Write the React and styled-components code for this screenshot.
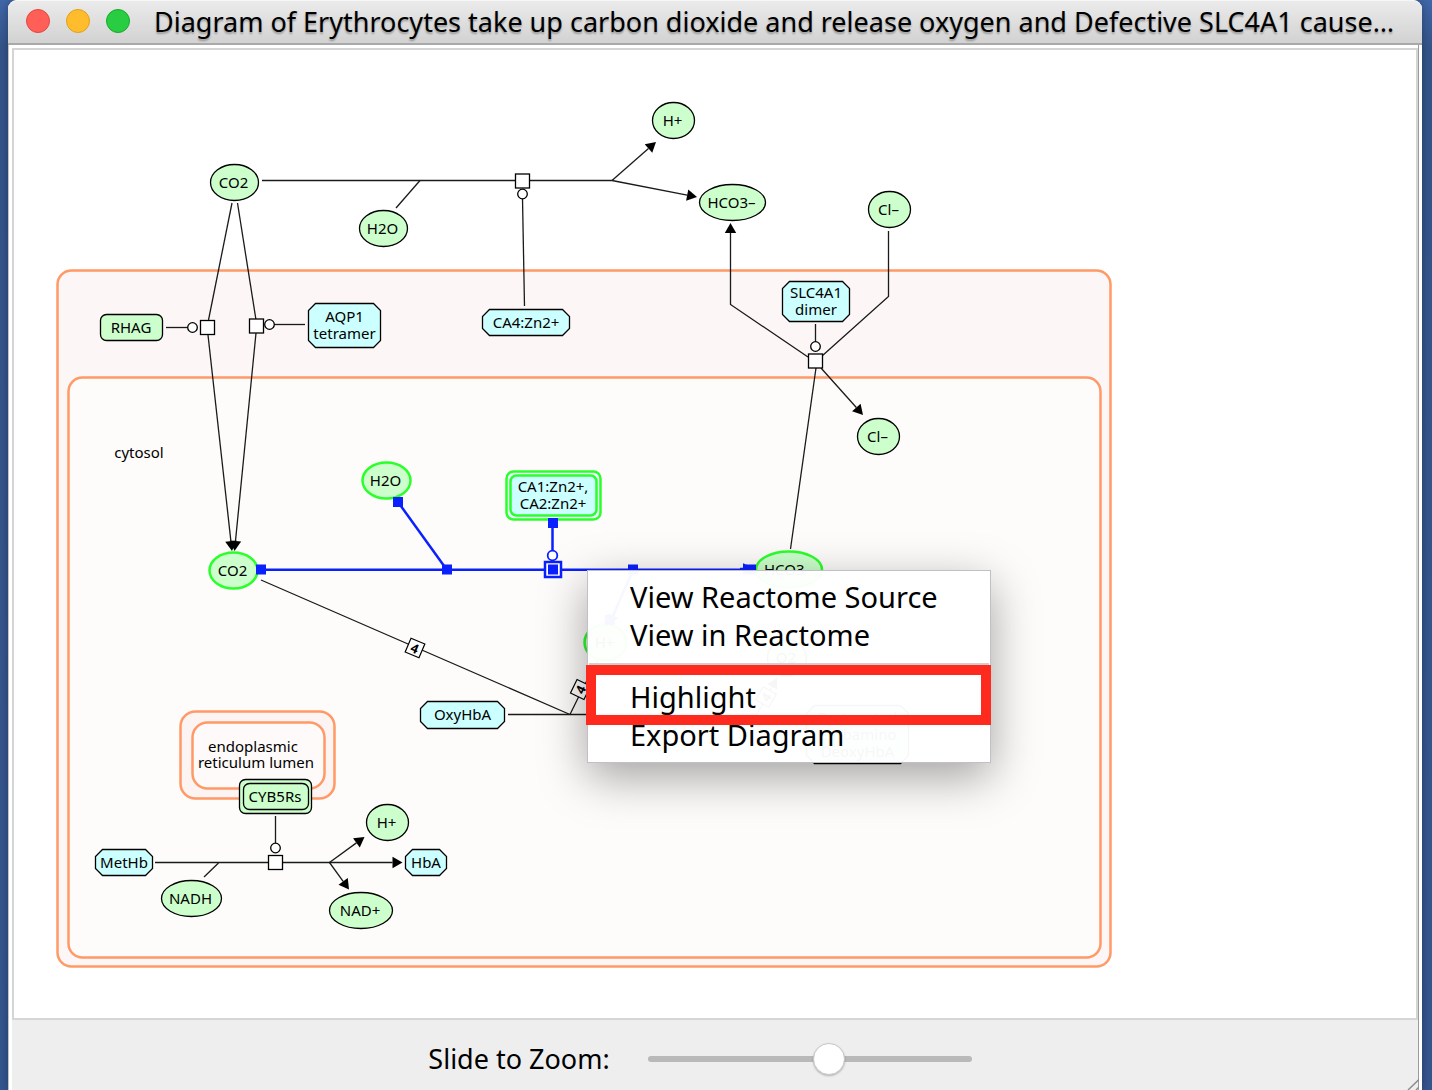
import React, { useState } from "react";
import styled, { createGlobalStyle } from "styled-components";

const FONT = '"Noto Sans", "Open Sans", sans-serif';
const ORANGE = "#ff9966";
const LIME = "#2bff2b";
const BLUE = "#0a20ff";

const GlobalStyle = createGlobalStyle`
  * { box-sizing: border-box; }
  body {
    margin: 0;
    font-family: ${FONT};
    color: #000;
    background: linear-gradient(#4067a8, #34548a 48px, #35558f);
  }
`;

const Desktop = styled.div`
  min-height: 100vh;
  display: flex;
  padding: 0 10px 0 8px;
`;

const Window = styled.main`
  flex: 1;
  min-width: 0;
  display: flex;
  flex-direction: column;
  border-radius: 9px 9px 0 0;
  background: #fff;
  box-shadow: 0 0 10px rgba(0, 0, 0, 0.3);
`;

const TitleBar = styled.header`
  height: 45px;
  display: flex;
  align-items: center;
  gap: 24px;
  padding: 0 24px 3px 18px;
  border-radius: 9px 9px 0 0;
  border-top: 1px solid #f6f6f6;
  border-bottom: 2px solid #a9a9a9;
  background: linear-gradient(#ebebeb, #d2d2d2);
`;

const Lights = styled.div`
  display: flex;
  flex: none;
  gap: 16px;
`;

const Light = styled.button`
  width: 24px;
  height: 24px;
  padding: 0;
  border: 1px solid ${(p) => p.$edge};
  border-radius: 50%;
  background: ${(p) => p.$fill};
`;

const Title = styled.h1`
  margin: 0;
  padding-top: 2px;
  font-size: 27px;
  line-height: 36px;
  font-weight: 400;
  white-space: nowrap;
  text-shadow: 0 2px 2px rgba(0, 0, 0, 0.3);
`;

const Body = styled.div`
  flex: 1;
  display: flex;
  flex-direction: column;
  margin-right: 3px;
  padding: 3px 0 0 3px;
  border-left: 1px solid #c4c4c4;
  border-right: 1px solid #9c9c9c;
`;

const Canvas = styled.section`
  position: relative;
  flex: 1;
  border: 2px solid #d5d5d5;
  background: #fff;
`;

const Footer = styled.footer`
  position: relative;
  height: 70px;
  display: flex;
  align-items: center;
  justify-content: center;
  gap: 38px;
  padding: 8px 30px 0 0;
  background: #eee;
`;

const ZoomLabel = styled.label`
  font-size: 27px;
  line-height: 36px;
`;

const ZoomSlider = styled.input`
  appearance: none;
  width: 324px;
  height: 34px;
  margin: 0;
  background: transparent;
  &::-webkit-slider-runnable-track {
    height: 6px;
    border-radius: 3px;
    background: #b9b9b9;
  }
  &::-webkit-slider-thumb {
    appearance: none;
    width: 32px;
    height: 32px;
    margin-top: -13px;
    border: 1px solid #c8c8c8;
    border-radius: 50%;
    background: #fff;
    box-shadow: 0 1px 2px rgba(0, 0, 0, 0.25);
  }
`;

const Grip = styled.svg`
  position: absolute;
  right: -1px;
  bottom: 0;
`;

const Menu = styled.div`
  position: absolute;
  left: 573px;
  top: 520px;
  width: 404px;
  display: flex;
  flex-direction: column;
  padding: 7px 0 8px;
  border: 1px solid rgba(150, 150, 160, 0.6);
  background: rgba(255, 255, 255, 0.965);
  box-shadow: 0 14px 44px rgba(0, 0, 0, 0.36);
`;

const MenuItem = styled.button`
  height: 38px;
  padding: 0 0 0 42px;
  border: 0;
  background: transparent;
  font: 400 29px/38px ${FONT};
  text-align: left;
`;

const MenuRule = styled.hr`
  width: 400px;
  height: 2px;
  margin: 9px 0 13px 1px;
  border: 0;
  background: #cfcfcf;
`;

const Callout = styled.div`
  position: absolute;
  left: -2px;
  top: 94px;
  width: 405px;
  height: 60px;
  border: 10px solid #ff2a1e;
  pointer-events: none;
`;

const Drawing = styled.svg`
  display: block;
`;

const Caption = styled.text`
  font-family: ${FONT};
  font-size: 15px;
  text-anchor: middle;
`;

const Count = styled.text`
  font-family: ${FONT};
  font-size: 13px;
  font-weight: 700;
  text-anchor: middle;
`;

const Edge = styled.polyline`
  fill: none;
  stroke: ${(p) => (p.$on ? BLUE : "#1a1a1a")};
  stroke-width: ${(p) => (p.$on ? 2.5 : 1.3)};
`;

const Compartment = styled.rect`
  fill: ${(p) => p.$fill};
  stroke: ${ORANGE};
  stroke-width: 2.5;
`;

function Labels({ x, y, lines, step = 17 }) {
  const first = y + 5 - ((lines.length - 1) * step) / 2;
  return lines.map((t, i) => (
    <Caption key={t} x={x} y={first + i * step}>{t}</Caption>
  ));
}

function Molecule({ x, y, rx = 24, label, on }) {
  return (
    <g>
      <ellipse cx={x} cy={y} rx={rx} ry="18" fill="#ccffcc" stroke={on ? LIME : "#000"} strokeWidth={on ? 2.5 : 1.3} />
      <Labels x={x - 1} y={y} lines={[label]} />
    </g>
  );
}

function Complex({ x, y, w, h, c = 7, lines }) {
  const pts = [
    [x + c, y], [x + w - c, y], [x + w, y + c], [x + w, y + h - c],
    [x + w - c, y + h], [x + c, y + h], [x, y + h - c], [x, y + c],
  ].join(" ");
  return (
    <g>
      <polygon points={pts} fill="#ccffff" stroke="#000" strokeWidth="1.3" />
      <Labels x={x + w / 2} y={y + h / 2} lines={lines} />
    </g>
  );
}

function Arrow({ points, on, back = 10 }) {
  const [x0, y0] = points[points.length - 2];
  const [x1, y1] = points[points.length - 1];
  const len = Math.hypot(x1 - x0, y1 - y0);
  const ux = (x1 - x0) / len;
  const uy = (y1 - y0) / len;
  const bx = x1 - ux * back;
  const by = y1 - uy * back;
  const line = [...points.slice(0, -1), [bx, by]];
  const head = [[x1, y1], [bx - uy * 5.7, by + ux * 5.7], [bx + uy * 5.7, by - ux * 5.7]];
  return (
    <g>
      <Edge $on={on} points={line.join(" ")} />
      <polygon points={head.join(" ")} fill={on ? BLUE : "#000"} />
    </g>
  );
}

function Reaction({ x, y }) {
  return <rect x={x - 7} y={y - 7} width="14" height="14" fill="#fff" stroke="#000" strokeWidth="1.3" />;
}

function Catalyst({ x, y, on }) {
  return <circle cx={x} cy={y} r="4.8" fill="#fff" stroke={on ? BLUE : "#000"} strokeWidth={on ? 1.8 : 1.3} />;
}

function Handle({ x, y }) {
  return <rect x={x - 5} y={y - 5} width="10" height="10" fill={BLUE} />;
}

function Stoich({ x, y, angle }) {
  return (
    <g transform={`translate(${x} ${y}) rotate(${angle})`}>
      <rect x="-7.5" y="-7.5" width="15" height="15" fill="#fff" stroke="#000" strokeWidth="1.2" />
      <Count x="0" y="5">4</Count>
    </g>
  );
}

function Pathway() {
  return (
    <Drawing width="1120" height="940" viewBox="14 50 1120 940" role="img" aria-label="Pathway diagram">
      <Compartment x="57.5" y="270.5" width="1053" height="696" rx="14" $fill="#fcf6f6" />
      <Compartment x="68.5" y="377.5" width="1032" height="580" rx="14" $fill="#fdfcfa" />
      <Compartment x="180.5" y="711.5" width="154" height="87" rx="15" $fill="#fcf3f3" />
      <Compartment x="192.5" y="722.5" width="132" height="66" rx="15" $fill="#fdfaf9" />
      <Caption x="139" y="458">cytosol</Caption>
      <Caption x="253" y="752">endoplasmic</Caption>
      <Caption x="256" y="768">reticulum lumen</Caption>

      <Edge points="262,180.5 612,180.5" />
      <Edge points="396,208 420,180.5" />
      <Arrow points={[[612, 180.5], [656, 142]]} />
      <Arrow points={[[612, 180.5], [697, 197]]} />
      <Edge points="522.5,198 524.5,306" />
      <Reaction x={522.5} y={181} />
      <Catalyst x={522.5} y={194} />

      <Arrow points={[[808, 357], [730.5, 304.5], [730.5, 223]]} />
      <Edge points="888.5,231 888.5,296.5 822,356" />
      <Edge points="815.5,324 815.5,342" />
      <Edge points="816,368 790.5,549" />
      <Arrow points={[[821, 368], [863, 415]]} />
      <Reaction x={815.5} y={361} />
      <Catalyst x={815.5} y={346.5} />

      <Edge points="232,203 208.5,320" />
      <Arrow points={[[208, 335], [232, 551]]} />
      <Edge points="237.5,203 256,320" />
      <Arrow points={[[256, 333], [234.5, 551]]} />
      <Edge points="166,327.5 188,327.5" />
      <Edge points="274,324.5 305,324.5" />
      <Reaction x={207.5} y={327.5} />
      <Catalyst x={192.5} y={327.5} />
      <Reaction x={256.5} y={326} />
      <Catalyst x={269.5} y={324.5} />

      <Edge points="261,580 570,714.5 582,690 611,635" />
      <Edge points="508,714.5 757,714.5" />
      <Arrow points={[[757, 714.5], [777, 678]]} />
      <Stoich x={415} y={648} angle={23} />
      <Stoich x={580.5} y={689.5} angle={-64} />
      <Stoich x={766} y={697} angle={-60} />

      <Edge points="155,862.5 330,862.5" />
      <Edge points="204,877 218.5,863" />
      <Arrow points={[[329.5, 862.5], [402.5, 862.5]]} />
      <Arrow points={[[329.5, 862.5], [364.5, 837]]} />
      <Arrow points={[[329.5, 862.5], [349, 889.5]]} />
      <Edge points="275.5,816 275.5,843" />
      <Catalyst x={275.5} y={848} />
      <Reaction x={275.5} y={862.5} />

      <Molecule x={234.5} y={182.5} label="CO2" />
      <Molecule x={383.5} y={228.5} label="H2O" />
      <Molecule x={673.5} y={120.5} rx={21} label="H+" />
      <Molecule x={732.5} y={202.5} rx={33} label="HCO3–" />
      <Molecule x={889.5} y={209.5} rx={21} label="Cl–" />
      <Molecule x={878.5} y={436.5} rx={21} label="Cl–" />
      <Molecule x={191.5} y={898.5} rx={30} label="NADH" />
      <Molecule x={387.5} y={822.5} rx={21} label="H+" />
      <Molecule x={361} y={910.5} rx={31.5} label="NAD+" />
      <Molecule x={787} y={658} rx={19.5} label="O2" />

      <Complex x={308.5} y={303.5} w={72} h={44} lines={["AQP1", "tetramer"]} />
      <Complex x={482.5} y={309.5} w={87} h={26} lines={["CA4:Zn2+"]} />
      <Complex x={782.5} y={281.5} w={67} h={40} lines={["SLC4A1", "dimer"]} />
      <Complex x={420.5} y={701.5} w={84} h={27} lines={["OxyHbA"]} />
      <Complex x={95.5} y={849.5} w={57} h={26} lines={["MetHb"]} />
      <Complex x={405.5} y={849.5} w={41} h={26} lines={["HbA"]} />
      <Complex x={806.5} y={705.5} w={102} h={58} c={8} lines={["Protonated", "Carbamino", "DeoxyHbA"]} />

      <rect x="100.5" y="314.5" width="62" height="26" rx="6" fill="#ccffcc" stroke="#000" strokeWidth="1.3" />
      <Caption x="131" y="333">RHAG</Caption>
      <rect x="239.5" y="779.5" width="72" height="34" rx="6" fill="#ccffcc" stroke="#000" strokeWidth="1.3" />
      <rect x="243.5" y="783.5" width="65" height="26" rx="6" fill="#ccffcc" stroke="#000" strokeWidth="1.3" />
      <Caption x="275" y="802">CYB5Rs</Caption>

      <Edge $on points="261,569.8 751,569.8" />
      <Edge $on points="398,502 447,570" />
      <Edge $on points="552.5,523 552.5,550" />
      <Arrow on points={[[633, 570], [609, 625]]} />
      <Arrow on points={[[740, 569], [757, 569]]} back={14} />
      <Molecule x={233.5} y={570.5} label="CO2" on />
      <Molecule x={386.5} y={480.5} label="H2O" on />
      <Molecule x={789} y={569.5} rx={33} label="HCO3–" on />
      <Molecule x={605.5} y={642.5} rx={21} label="H+" on />
      <rect x="506.5" y="471.5" width="94" height="48" rx="7" fill="#eaffff" stroke={LIME} strokeWidth="2.5" />
      <rect x="510.5" y="475.5" width="86" height="40" rx="6" fill="#ccffff" stroke={LIME} strokeWidth="2.5" />
      <Labels x={553} y={495.5} lines={["CA1:Zn2+,", "CA2:Zn2+"]} />
      <Catalyst x={552.5} y={555.5} on />
      <rect x="545" y="562" width="16" height="15" fill="#fff" stroke={BLUE} strokeWidth="2.5" />
      <Handle x={553} y={569.5} />
      <Handle x={261} y={569.5} />
      <Handle x={398} y={502} />
      <Handle x={447} y={569.5} />
      <Handle x={553} y={523} />
      <Handle x={633} y={569.5} />
      <Handle x={751} y={569.5} />
      <Handle x={610} y={620} />
    </Drawing>
  );
}

export default function App() {
  const [zoom, setZoom] = useState(113);
  return (
    <Desktop>
      <GlobalStyle />
      <Window>
        <TitleBar>
          <Lights>
            <Light aria-label="Close" $fill="#ff5f57" $edge="#e2463f" />
            <Light aria-label="Minimize" $fill="#ffbd2e" $edge="#e1a116" />
            <Light aria-label="Zoom window" $fill="#28cd41" $edge="#12ac28" />
          </Lights>
          <Title>Diagram of Erythrocytes take up carbon dioxide and release oxygen and Defective SLC4A1 cause…</Title>
        </TitleBar>
        <Body>
          <Canvas>
            <Pathway />
            <Menu role="menu">
              <MenuItem role="menuitem">View Reactome Source</MenuItem>
              <MenuItem role="menuitem">View in Reactome</MenuItem>
              <MenuRule />
              <MenuItem role="menuitem">Highlight</MenuItem>
              <MenuItem role="menuitem">Export Diagram</MenuItem>
              <Callout />
            </Menu>
          </Canvas>
          <Footer>
            <ZoomLabel htmlFor="zoom">Slide to Zoom:</ZoomLabel>
            <ZoomSlider id="zoom" type="range" min="0" max="200" value={zoom} onChange={(e) => setZoom(Number(e.target.value))} />
            <Grip width="12" height="11" viewBox="0 0 12 11" stroke="#8a8a8a" strokeWidth="1.4">
              <path d="M1 11 L12 0.5 M9 11 L12 8" />
            </Grip>
          </Footer>
        </Body>
      </Window>
    </Desktop>
  );
}
